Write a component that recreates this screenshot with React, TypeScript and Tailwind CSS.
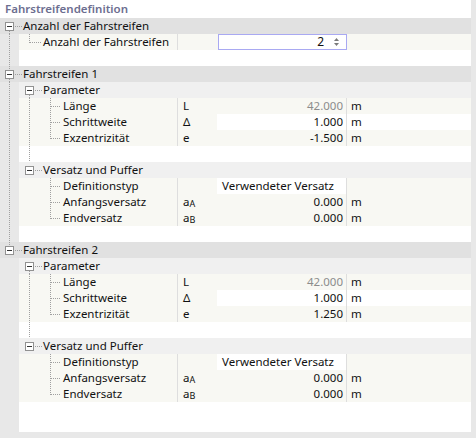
import React from 'react';

type Leaf = {
  kind: 'leaf';
  level: 2 | 3;
  label: string;
  sym?: React.ReactNode;
  value?: React.ReactNode;
  unit?: string;
  l1?: boolean;
  l2?: boolean;
  last?: boolean;
  valueBg?: 'white' | 'beige';
  rowBg?: 'white' | 'beige';
  muted?: boolean;
  text?: boolean;
  spinner?: boolean;
};

type Row =
  | { kind: 'h1'; label: string; above?: boolean; below?: boolean }
  | { kind: 'h2'; label: string; l1?: boolean; below?: boolean }
  | { kind: 'blank'; l1?: boolean; l2?: boolean }
  | Leaf;

const Sub = ({ main, sub }: { main: string; sub: string }) => (
  <span>
    {main}
    <span className="text-[9px] relative top-[1px]">{sub}</span>
  </span>
);

const lane = (label: string, ecc: string, l1: boolean): Row[] => [
  { kind: 'h1', label, above: true, below: l1 },
  { kind: 'h2', label: 'Parameter', l1, below: true },
  { kind: 'leaf', level: 3, label: 'Länge', sym: 'L', value: '42.000', unit: 'm', l1, l2: true, muted: true, valueBg: 'beige', rowBg: 'beige' },
  { kind: 'leaf', level: 3, label: 'Schrittweite', sym: 'Δ', value: '1.000', unit: 'm', l1, l2: true, valueBg: 'white', rowBg: 'white' },
  { kind: 'leaf', level: 3, label: 'Exzentrizität', sym: 'e', value: ecc, unit: 'm', l1, l2: true, last: true, valueBg: 'beige', rowBg: 'beige' },
  { kind: 'blank', l1, l2: true },
  { kind: 'h2', label: 'Versatz und Puffer', l1 },
  { kind: 'leaf', level: 3, label: 'Definitionstyp', value: 'Verwendeter Versatz', text: true, l1, valueBg: 'white', rowBg: 'beige' },
  { kind: 'leaf', level: 3, label: 'Anfangsversatz', sym: <Sub main="a" sub="A" />, value: '0.000', unit: 'm', l1, valueBg: 'beige', rowBg: 'beige' },
  { kind: 'leaf', level: 3, label: 'Endversatz', sym: <Sub main="a" sub="B" />, value: '0.000', unit: 'm', l1, last: true, valueBg: 'beige', rowBg: 'beige' },
  ...(l1 ? [{ kind: 'blank', l1 } as Row] : []),
];

const rows: Row[] = [
  { kind: 'h1', label: 'Anzahl der Fahrstreifen', below: true },
  { kind: 'leaf', level: 2, label: 'Anzahl der Fahrstreifen', l1: true, last: true, spinner: true, rowBg: 'beige' },
  { kind: 'blank', l1: true },
  ...lane('Fahrstreifen 1', '-1.500', true),
  ...lane('Fahrstreifen 2', '1.250', false),
];

const dot = { stroke: '#a0a0a0', strokeWidth: 1, strokeDasharray: '1 1', shapeRendering: 'crispEdges' as const };

const Box = ({ x }: { x: number }) => (
  <g shapeRendering="crispEdges">
    <rect x={x + 0.5} y={4.5} width={8} height={8} fill="#fff" stroke="#919191" />
    <line x1={x + 2} y1={8.5} x2={x + 7} y2={8.5} stroke="#333" />
  </g>
);

function Lines({ row }: { row: Row }) {
  const els: React.ReactNode[] = [];
  if (row.kind === 'h1') {
    if (row.above) els.push(<line key="a" x1={9.5} y1={0} x2={9.5} y2={4} {...dot} />);
    if (row.below) els.push(<line key="b" x1={9.5} y1={13} x2={9.5} y2={16} {...dot} />);
    els.push(<line key="h" x1={15} y1={8.5} x2={22} y2={8.5} {...dot} />);
    els.push(<Box key="box" x={5} />);
  } else {
    if (row.l1) els.push(<line key="l1" x1={9.5} y1={0} x2={9.5} y2={16} {...dot} />);
    if (row.kind === 'h2') {
      if (row.below) els.push(<line key="b" x1={29.5} y1={13} x2={29.5} y2={16} {...dot} />);
      els.push(<line key="h" x1={35} y1={8.5} x2={42} y2={8.5} {...dot} />);
      els.push(<Box key="box" x={25} />);
    } else if (row.kind === 'blank') {
      if (row.l2) els.push(<line key="l2" x1={29.5} y1={0} x2={29.5} y2={16} {...dot} />);
    } else if (row.level === 2) {
      els.push(<line key="v" x1={29.5} y1={0} x2={29.5} y2={row.last ? 9 : 16} {...dot} />);
      els.push(<line key="h" x1={30} y1={8.5} x2={41} y2={8.5} {...dot} />);
    } else {
      if (row.l2) els.push(<line key="l2" x1={29.5} y1={0} x2={29.5} y2={16} {...dot} />);
      els.push(<line key="v" x1={50.5} y1={0} x2={50.5} y2={row.last ? 9 : 16} {...dot} />);
      els.push(<line key="h" x1={51} y1={8.5} x2={61} y2={8.5} {...dot} />);
    }
  }
  return (
    <svg className="absolute left-0 top-0 pointer-events-none" width={64} height={16}>
      {els}
    </svg>
  );
}

function Spinner() {
  return (
    <div className="ml-px h-4 w-[129px] border border-[#a9a9f2] bg-white flex items-center justify-end pr-[6px]">
      <span className="mr-[9px] text-[12px]">2</span>
      <svg width={7} height={10} viewBox="0 0 7 10">
        <path d="M3.5 1 L6 4 L1 4 Z" fill="#7a7a7a" />
        <path d="M3.5 9 L6 6 L1 6 Z" fill="#7a7a7a" />
      </svg>
    </div>
  );
}

function TreeRow({ row }: { row: Row }) {
  if (row.kind === 'h1') {
    return (
      <div className="relative flex h-4 bg-[#e1e1e1]">
        <Lines row={row} />
        <span className="pl-[23px] leading-4">{row.label}</span>
      </div>
    );
  }
  if (row.kind === 'h2') {
    return (
      <div className="relative flex h-4">
        <div className="w-[19px] bg-[#e8e8e8]" />
        <div className="flex-1 bg-[#f0f0f0] pl-[24px] leading-4">{row.label}</div>
        <Lines row={row} />
      </div>
    );
  }
  if (row.kind === 'blank') {
    return (
      <div className="relative flex h-4">
        <div className="w-[19px] bg-[#e8e8e8]" />
        <div className="flex-1 bg-white" />
        <Lines row={row} />
      </div>
    );
  }
  const rowBg = row.rowBg === 'white' ? 'bg-white' : 'bg-[#f8f8f3]';
  const valBg = row.valueBg === 'white' ? 'bg-white' : 'bg-[#f8f8f3]';
  return (
    <div className="relative flex h-4 leading-4">
      <div className="w-[19px] bg-[#e8e8e8]" />
      <div
        className={
          'w-[159px] border-r border-[#dedede] bg-[#f8f8f3] ' + (row.level === 2 ? 'pl-[24px]' : 'pl-[44px]')
        }
      >
        {row.label}
      </div>
      <div className="w-[39px] bg-[#f8f8f3] pl-[5px]">{row.sym}</div>
      {row.spinner ? (
        <div className="flex w-[130px] bg-[#f8f8f3]">
          <Spinner />
        </div>
      ) : (
        <div
          className={
            'w-[130px] border-r border-[#dedede] ' +
            valBg +
            (row.text ? ' pl-[5px]' : ' pr-[3px] text-right') +
            (row.muted ? ' text-[#8c8c8c]' : '')
          }
        >
          {row.value}
        </div>
      )}
      <div className={'flex-1 pl-[4px] ' + (row.spinner ? 'bg-[#f8f8f3]' : rowBg)}>{row.unit}</div>
      <Lines row={row} />
    </div>
  );
}

export default function App() {
  return (
    <div
      className="w-[476px] h-[438px] bg-[#e8e8e8] text-[11.5px] text-[#111111] overflow-hidden"
      style={{ fontFamily: '"Noto Sans", "DejaVu Sans", sans-serif' }}
    >
      <div className="w-[471px] h-[432px] bg-white flex flex-col">
        <div className="h-[18px] pl-[5px] leading-[17px] font-semibold text-[#6c6e90]">Fahrstreifendefinition</div>
        <div className="flex flex-col">
          {rows.map((r, i) => (
            <TreeRow key={i} row={r} />
          ))}
        </div>
        <div className="flex-1 flex">
          <div className="w-[19px] bg-[#e8e8e8]" />
        </div>
      </div>
    </div>
  );
}
